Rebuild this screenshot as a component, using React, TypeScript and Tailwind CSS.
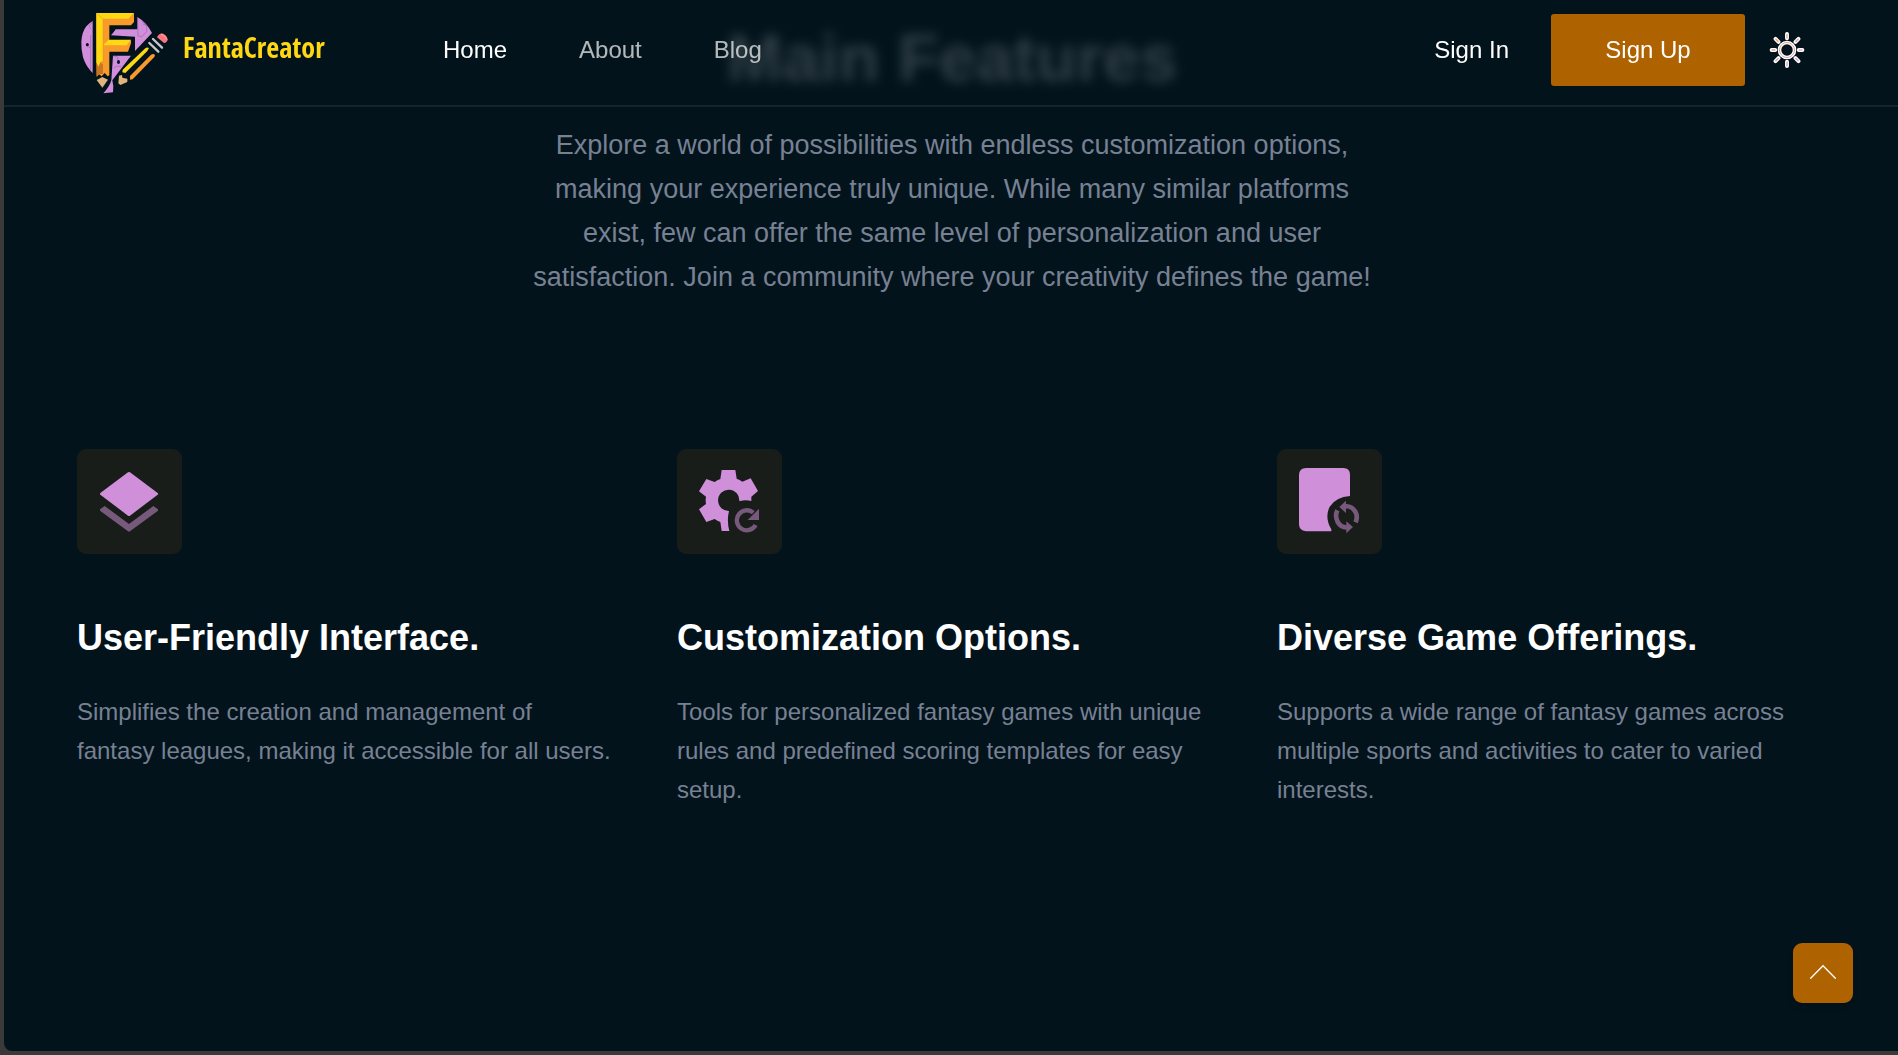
import type { ReactNode } from "react";

function Logo() {
  return (
    <svg viewBox="60 30 276 255" className="mt-1.5 h-[85px] w-[92px] shrink-0" aria-hidden="true">
      <g fill="#d08edb">
        <path d="M101 63 L101 219 Q81 200 72 172 Q66 145 67 125 Q69 95 82 79 Q90 69 101 63 Z" />
        <path d="M235 51 Q262 66 279 99 L228 153 L228 110 L156 106 Q164 98 170 88 L235 88 Z" />
        <path d="M162 167 L216 167 L160 241 Q165 258 162 277 L133 280 Q153 258 157 240 Z" />
      </g>
      <g fill="none" stroke="#8b5a95" strokeWidth="1.5">
        <path d="M100 66 L90 78 L97 88 M95 105 V210 M84 140 L93 142" />
        <path d="M236 55 L237 108 L248 110 L264 94 L262 76 L252 72 M247 62 L262 76" />
        <path d="M164 168 L176 171 V180 M164 205 L172 199 L186 199" />
      </g>
      <ellipse cx="85" cy="134" rx="4.500" ry="5" fill="#02131c" />
      <ellipse cx="178.500" cy="186" rx="4.500" ry="6" fill="#02131c" />
      <path d="M112 40 H225 V66 L216 76 H151 V121 H216 V130 L207 155 H151 V226 L146 229 L137 219 L128 229 L120 223 L113 230 Z" fill="#f99a2c" />
      <path d="M112 39 H225 L209 56 H132 V182 L124 187 L119 200 L112 188 Z" fill="#ffd814" />
      <path d="M132 136 L149 119 H216 L203 136 Z" fill="#ffd814" />
      <path d="M112 188 L119 200 L124 187 L132 194 V222 L120 223 L113 230 Z" fill="#c87621" />
      <path d="M224 41 L209 57 M113 40 L132 57 M132 57 V190" stroke="#d89a12" strokeWidth="1.500" fill="none" />
      <path d="M113 240 L130 231 L147 239 L130 263 Z" fill="#deb57c" />
      <path d="M126 258 L130 263 L135 257" fill="none" stroke="#6a5138" strokeWidth="2" />
      <path d="M259 145 Q264 140 270 144 L265 153 L199 219 L190 217 L191 209 Z" fill="#ffd814" />
      <path d="M276 164 Q284 159 288 166 L286 171 L221 238 L213 239 L213 228 Z" fill="#f99a2c" />
      <path d="M180 227 L189 225 L190 233 L205 236 L205 246 L184 255 L178 250 Z" fill="#deb57c" />
      <g stroke="#c4c8ca" strokeWidth="7" strokeLinecap="round">
        <path d="M271 129 L298 155" />
        <path d="M282 117 L309 143" />
      </g>
      <path d="M294 112 Q300 98 313 101 Q325 107 326 119 Q324 128 315 129 Z" fill="#fb7680" />
      <path d="M306 102 Q318 105 324 119" stroke="#ffa2a2" strokeWidth="3" fill="none" />
    </svg>
  );
}

function SunIcon() {
  return (
    <svg viewBox="1105 95 108 110" className="size-9" fill="none" strokeLinecap="round" aria-hidden="true">
      <defs>
        <linearGradient id="sun" gradientUnits="userSpaceOnUse" x1="1120" y1="96" x2="1195" y2="204">
          <stop offset="0" stopColor="#e5a35f" />
          <stop offset="1" stopColor="#d9a0dc" />
        </linearGradient>
      </defs>
      <g stroke="#fff" strokeWidth="12">
        <circle cx="1159" cy="150" r="23" strokeWidth="11" />
        <path d="M1159 101 V114 M1159 186 V199 M1112 150 H1123 M1195 150 H1206 M1124 116 L1133 125 M1185 125 L1194 116 M1124 184 L1133 175 M1185 175 L1194 184" />
      </g>
      <g stroke="url(#sun)" strokeWidth="4">
        <circle cx="1159" cy="150" r="23" strokeWidth="3" />
        <path d="M1159 102 V113 M1159.1 187 V198 M1113 150 H1122 M1196 150.1 H1205 M1125 117 L1132 124 M1186 124 L1193 117 M1125 183 L1132 176 M1186 176 L1193 183" />
      </g>
    </svg>
  );
}

const pink = "#cf8fd9";
const dim = "#77597b";

function LayersIcon() {
  return (
    <svg viewBox="21 27 315 315" className="size-full" aria-hidden="true">
      <path d="M174 97 Q177 95 180 97 L263 159 Q266 162 263 164 L180 227 Q177 229 174 227 L91 164 Q89 162 91 159 Z" fill={pink} />
      <path d="M104 198 L177 252 L250 198 L264 208 V212 L180 274 Q177 276 174 274 L90 212 V208 Z" fill={dim} />
    </svg>
  );
}

function GearIcon() {
  return (
    <svg viewBox="21 27 315 315" className="size-full" aria-hidden="true">
      <path
        d="M155 90 H196 L200 116 Q209 119 217 125 L242 115 L264 153 L244 170 V183 Q226 178 208 184 A32 32 0 1 0 177 213 Q170 242 178 273 H155 L151 246 Q142 243 134 237 L109 246 L87 208 L108 192 Q106 181 108 170 L87 154 L109 117 L134 126 Q142 120 151 117 Z"
        fill={pink}
      />
      <path d="M257 255 A30 30 0 1 1 250 218" fill="none" stroke={dim} strokeWidth="13" />
      <path d="M267 206 V240 H233 Z" fill={dim} />
    </svg>
  );
}

function DocumentIcon() {
  return (
    <svg viewBox="21 27 315 315" className="size-full" aria-hidden="true">
      <path d="M108 84 H220 Q240 85 240 104 V168 Q198 171 179 200 Q163 232 184 268 V274 H108 Q87 272 87 253 V104 Q88 85 108 84 Z" fill={pink} />
      <g fill="none" stroke={dim} strokeWidth="14">
        <path d="M226 199 Q245 197 256 215 Q264 229 257 247" />
        <path d="M202 211 Q194 228 203 246 Q213 263 231 262" />
      </g>
      <path d="M208 201 L228 182 V219 Z M249 261 L229 244 V280 Z" fill={dim} />
    </svg>
  );
}

type Feature = { title: string; text: string; icon: ReactNode };

const features: Feature[] = [
  {
    title: "User-Friendly Interface.",
    text: "Simplifies the creation and management of fantasy leagues, making it accessible for all users.",
    icon: <LayersIcon />,
  },
  {
    title: "Customization Options.",
    text: "Tools for personalized fantasy games with unique rules and predefined scoring templates for easy setup.",
    icon: <GearIcon />,
  },
  {
    title: "Diverse Game Offerings.",
    text: "Supports a wide range of fantasy games across multiple sports and activities to cater to varied interests.",
    icon: <DocumentIcon />,
  },
];

function Header() {
  return (
    <header className="fixed top-0 right-0 left-1 z-10 border-b-2 border-[#14252c] bg-[#02131c]/82 backdrop-blur-[6px]">
      <div className="mx-auto flex h-[105px] max-w-[1744px] items-center pb-1.5">
        <a href="#home" className="mr-[120px] flex w-[244px] items-center gap-3">
          <Logo />
          <span className="pb-1.5 font-['Liberation_Sans_Narrow','Open_Sans_Condensed','Roboto_Condensed',sans-serif] text-[28px] leading-8 font-bold text-[#ffd814]">
            FantaCreator
          </span>
        </a>
        <nav className="flex gap-[72px] text-white/70">
          <a href="#home" className="text-white">Home</a>
          <a href="#about">About</a>
          <a href="#blog">Blog</a>
        </nav>
        <div className="ml-auto flex items-center">
          <a href="#signin" className="mr-[42px]">Sign In</a>
          <a href="#signup" className="flex h-[72px] w-[194px] items-center justify-center rounded-[3px] bg-[#ae6200]">
            Sign Up
          </a>
          <button type="button" aria-label="Toggle theme" className="mr-[18px] ml-6">
            <SunIcon />
          </button>
        </div>
      </div>
    </header>
  );
}

export default function App() {
  return (
    <div className="flex min-h-screen bg-[#3a3a3a] pb-1 pl-1 font-['Liberation_Sans',Arial,sans-serif] text-2xl leading-[39px] text-white">
      <div className="flex-1 rounded-bl-lg bg-[#02131c]">
        <Header />
        <main className="mx-auto max-w-[1748px] pt-[18px]">
          <section>
            <div className="mx-auto max-w-[864px] pl-0.5 text-center">
              <h2 className="text-[67px] leading-20 font-bold">Main Features</h2>
              <p className="mt-[25px] text-[27px] leading-[44px] text-[#788193]">
                Explore a world of possibilities with endless customization options, making your experience truly
                unique. While many similar platforms exist, few can offer the same level of personalization and user
                satisfaction. Join a community where your creativity defines the game!
              </p>
            </div>
            <div className="mt-[150px] grid grid-cols-3 gap-[52px]">
              {features.map((f) => (
                <article key={f.title}>
                  <div className="size-[105px] rounded-[9px] bg-[#181d1a]">{f.icon}</div>
                  <h3 className="mt-[60px] text-4xl leading-12 font-bold">{f.title}</h3>
                  <p className="mt-[30px] pr-3 text-[#788193]">{f.text}</p>
                </article>
              ))}
            </div>
          </section>
        </main>
      </div>
      <button
        type="button"
        aria-label="Back to top"
        className="fixed right-[45px] bottom-[52px] size-[60px] rounded-[9px] bg-[#ae6200] shadow-md"
      >
        <svg viewBox="69 69 180 180" className="size-full" fill="none" stroke="#fff" strokeWidth="4" strokeLinecap="round" aria-hidden="true">
          <path d="M122 175 L159 137 L196 175" />
        </svg>
      </button>
    </div>
  );
}
